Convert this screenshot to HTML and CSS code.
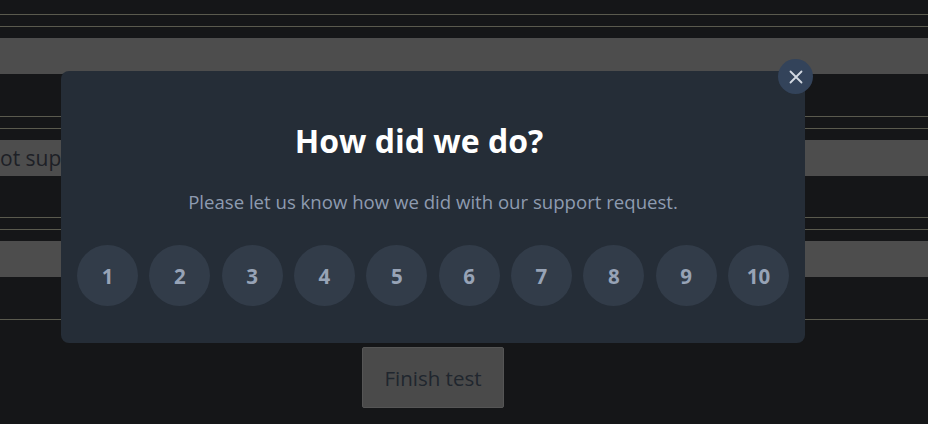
FILE: index.html
```html
<!DOCTYPE html>
<html>
<head>
<meta charset="utf-8">
<link rel="stylesheet" href="styles.css">
</head>
<body>
<div class="page">
  <div class="group first">
    <div class="rule"></div>
    <div class="rule second"></div>
    <div class="bar"></div>
  </div>
  <div class="group">
    <div class="rule"></div>
    <div class="rule second"></div>
    <div class="bar"><span class="bar-text">ot supported</span></div>
  </div>
  <div class="group">
    <div class="rule"></div>
    <div class="rule second"></div>
    <div class="bar"></div>
  </div>
  <div class="group">
    <div class="rule"></div>
  </div>
  <div class="footer">
    <button class="finish">Finish test</button>
  </div>
</div>

<div class="modal">
  <button class="close" aria-label="Close">
    <svg width="14" height="14" viewBox="0 0 14 14"><path d="M1.5 1.5 L12.5 12.5 M12.5 1.5 L1.5 12.5" stroke="#d3d9e2" stroke-width="1.8" stroke-linecap="round"/></svg>
  </button>
  <h2 class="title">How did we do?</h2>
  <p class="subtitle">Please let us know how we did with our support request.</p>
  <div class="scores">
    <button class="score">1</button>
    <button class="score">2</button>
    <button class="score">3</button>
    <button class="score">4</button>
    <button class="score">5</button>
    <button class="score">6</button>
    <button class="score">7</button>
    <button class="score">8</button>
    <button class="score">9</button>
    <button class="score">10</button>
  </div>
</div>
</body>
</html>
```

FILE: styles.css
```css
html, body {
  margin: 0;
  padding: 0;
  background: #151618;
  font-family: "Open Sans", "Noto Sans", sans-serif;
  overflow: hidden;
}
.page {
  width: 928px;
  height: 424px;
}
.group {
  padding-top: 41.5px;
  display: flex;
  flex-direction: column;
}
.group.first {
  padding-top: 14px;
}
.rule {
  height: 1px;
  background: #5a5a4e;
}
.rule.second {
  margin-top: 11px;
}
.bar {
  margin-top: 11px;
  height: 36px;
  background: #4d4d4d;
  display: flex;
  align-items: center;
  overflow: hidden;
}
.bar-text {
  margin-left: 0;
  font-size: 21px;
  color: #1d2026;
  white-space: nowrap;
}
.footer {
  width: 866px;
  display: flex;
  justify-content: center;
  padding-top: 27px;
}
.finish {
  width: 142px;
  height: 61px;
  background: #4a4a4a;
  border: 1px solid #555;
  border-radius: 2px;
  color: #20262e;
  font-family: "Open Sans", "Noto Sans", sans-serif;
  font-size: 20.5px;
  padding: 2px 0 0 0;
}
.modal {
  position: absolute;
  left: 61px;
  top: 71px;
  width: 744px;
  height: 272px;
  box-sizing: border-box;
  padding: 0 16px;
  background: #252d37;
  border-radius: 8px;
  display: flex;
  flex-direction: column;
  align-items: center;
}
.close {
  position: absolute;
  top: -12px;
  right: -8px;
  width: 35px;
  height: 35px;
  border-radius: 50%;
  border: none;
  padding: 0;
  background: #33435a;
  display: flex;
  align-items: center;
  justify-content: center;
}
.close svg {
  display: block;
}
.title {
  margin: 48px 28px 0 0;
  font-size: 32px;
  line-height: 44px;
  font-weight: 700;
  color: #ffffff;
}
.subtitle {
  margin: 26px 0 0 0;
  font-size: 18.6px;
  line-height: 26px;
  color: #8e9bb0;
}
.scores {
  margin-top: 30px;
  width: 100%;
  display: flex;
  justify-content: space-between;
}
.score {
  width: 61px;
  height: 61px;
  border-radius: 50%;
  border: none;
  padding: 0;
  background: #323c49;
  color: #97a3b6;
  font-family: "Open Sans", "Noto Sans", sans-serif;
  font-size: 20.5px;
  font-weight: 700;
}
```
